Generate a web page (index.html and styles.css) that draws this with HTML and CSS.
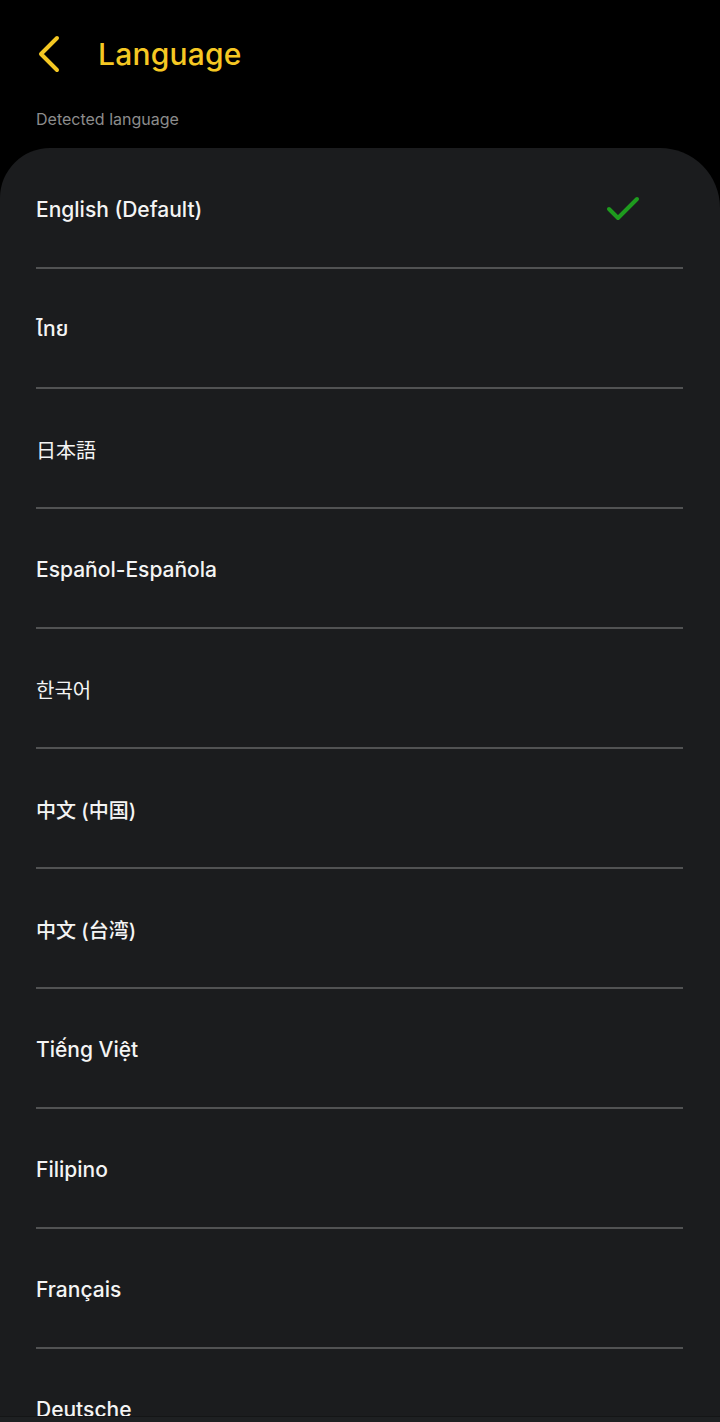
FILE: index.html
```html
<!DOCTYPE html>
<html lang="en">
<head>
<meta charset="utf-8">
<title>Language</title>
<link rel="stylesheet" href="styles.css">
</head>
<body>
<div class="screen">
  <header class="header">
    <button class="back" aria-label="Back">
      <svg width="24" height="40" viewBox="0 0 24 40"><path d="M21 4 L5 20 L21 36" fill="none" stroke="#F5C823" stroke-width="4" stroke-linecap="round" stroke-linejoin="round"/></svg>
    </button>
    <h1 class="title">Language</h1>
  </header>
  <div class="section-label">Detected language</div>
  <ul class="list">
    <li class="row"><span class="name">English (Default)</span>
      <svg class="check" width="48" height="48" viewBox="0 0 48 48"><path d="M10 24 L19 33 L38 14" fill="none" stroke="#1E9B1E" stroke-width="4" stroke-linecap="round" stroke-linejoin="round"/></svg>
    </li>
    <li class="row"><span class="name">ไทย</span></li>
    <li class="row"><span class="name cjk-jp">日本語</span></li>
    <li class="row"><span class="name">Español-Española</span></li>
    <li class="row"><span class="name cjk-kr">한국어</span></li>
    <li class="row"><span class="name cjk-sc">中文 (中国)</span></li>
    <li class="row"><span class="name cjk-sc">中文 (台湾)</span></li>
    <li class="row"><span class="name">Tiếng Việt</span></li>
    <li class="row"><span class="name">Filipino</span></li>
    <li class="row"><span class="name">Français</span></li>
    <li class="row"><span class="name">Deutsche</span></li>
  </ul>
  <div class="bottom-bar"></div>
</div>
</body>
</html>
```

FILE: styles.css
```css
* { box-sizing: border-box; }
html, body {
  margin: 0;
  padding: 0;
  background: #000;
}
body {
  font-family: Inter, "Noto Sans", "Noto Sans Thai", "Noto Sans CJK SC", sans-serif;
  color: #f2f2f2;
  width: 720px;
  height: 1422px;
  overflow: hidden;
}
.screen {
  position: relative;
  height: 1422px;
  overflow: hidden;
}
.header {
  display: flex;
  align-items: center;
  height: 108px;
  padding: 0 0 0 36px;
  gap: 37px;
}
.back {
  background: none;
  border: 0;
  padding: 0;
  width: 25px;
  height: 40px;
  display: flex;
  align-items: center;
}
.title {
  margin: 0;
  font-size: 30px;
  font-weight: 500;
  color: #F5C823;
  letter-spacing: 0.2px;
}
.section-label {
  padding: 0 36px;
  font-size: 16px;
  color: #8c8c8c;
  height: 40px;
  line-height: 22px;
}
.list {
  list-style: none;
  margin: 0;
  padding: 1px 37px 0 36px;
  background: #1b1c1e;
  border-radius: 50px 60px 0 0;
  min-height: 1274px;
}
.row {
  display: flex;
  align-items: center;
  justify-content: space-between;
  height: 120px;
  border-bottom: 2px solid #515253;
  padding-top: 2px;
}
.name {
  font-size: 21px;
  font-weight: 500;
  color: #f4f4f4;
}
.cjk-jp { font-family: "Noto Sans CJK JP", sans-serif; font-weight: 400; font-size: 20px; }
.cjk-kr { font-family: "Noto Sans CJK KR", sans-serif; font-weight: 400; font-size: 20px; }
.cjk-sc { font-family: Inter, "Noto Sans CJK SC", sans-serif; font-weight: 500; font-size: 20px; }
.check {
  margin-right: 36px;
}
.bottom-bar {
  position: absolute;
  left: 0;
  right: 0;
  bottom: 0;
  height: 6px;
  background: #1e2022;
  border-top: 1px solid #141516;
}
```
